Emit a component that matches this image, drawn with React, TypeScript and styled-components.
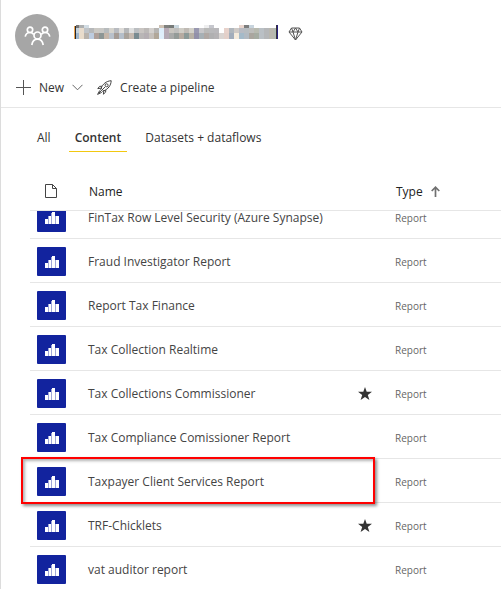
import React, { useLayoutEffect, useRef } from "react";
import styled, { createGlobalStyle } from "styled-components";

const GlobalStyle = createGlobalStyle`
  * { box-sizing: border-box; }
  body {
    margin: 0;
    background: #fff;
    color: #333;
    font-family: "Open Sans", "Noto Sans", sans-serif;
    font-size: 12px;
  }
  button { font: inherit; color: inherit; background: none; border: 0; padding: 0; cursor: pointer; }
`;

const Page = styled.main`
  display: flex;
  flex-direction: column;
  height: 100vh;
  border-left: 1px solid #dcdcdc;
`;

const Header = styled.header`
  display: flex;
  align-items: center;
  height: 70px;
  padding: 1px 14px 0;
`;

const Avatar = styled.div`
  display: flex;
  align-items: center;
  justify-content: center;
  width: 44px;
  height: 44px;
  border-radius: 50%;
  background: #a6a6a6;
`;

const Title = styled.h1`
  display: flex;
  align-items: center;
  gap: 9px;
  margin: 0 0 0 15px;
  padding-bottom: 4px;
`;

const Toolbar = styled.div`
  display: flex;
  align-items: center;
  gap: 14px;
  height: 38px;
  padding: 0 15px 2px;
  border-bottom: 1px solid #e6e6e6;
`;

const ToolButton = styled.button`
  display: flex;
  align-items: center;
  gap: 8px;
  line-height: 18px;
`;

const Tabs = styled.nav`
  display: flex;
  gap: 18px;
  height: 64px;
  padding: 18px 36px 0;
`;

const Tab = styled.button<{ $active?: boolean }>`
  height: 26px;
  padding: 0 ${(p) => (p.$active ? 6 : 0)}px 2px;
  line-height: 22px;
  font-weight: ${(p) => (p.$active ? 600 : 400)};
  border-bottom: 1px solid ${(p) => (p.$active ? "#f2c811" : "transparent")};
`;

const Scroller = styled.section`
  flex: 1;
  min-height: 0;
  padding-left: 29px;
  overflow-x: hidden;
  overflow-y: auto;
  scrollbar-width: none;
`;

const Table = styled.table`
  width: 100%;
  table-layout: fixed;
  border-collapse: separate;
  border-spacing: 0;
`;

const HeadCell = styled.th<{ $width?: number }>`
  position: sticky;
  top: 0;
  z-index: 2;
  width: ${(p) => (p.$width ? `${p.$width}px` : "auto")};
  height: 39px;
  padding: 0 0 0 1px;
  background: #fff;
  border-bottom: 1px solid #e6e6e6;
  color: #222;
  font-weight: 400;
  text-align: left;
  svg { display: block; }
`;

const FileHead = styled.span`
  display: block;
  padding-left: 14px;
`;

const SortButton = styled.button`
  display: flex;
  align-items: center;
  gap: 8px;
`;

const Row = styled.tr`
  position: relative;
`;

const Cell = styled.td<{ $small?: boolean }>`
  height: 44px;
  padding: 2px 0 0;
  border-bottom: 1px solid #e6e6e6;
  color: ${(p) => (p.$small ? "#666" : "#444")};
  font-size: ${(p) => (p.$small ? 10 : 12)}px;
  white-space: nowrap;
  svg { display: block; }
`;

const ReportTile = styled.span`
  display: flex;
  align-items: center;
  justify-content: center;
  width: 29px;
  height: 29px;
  margin-left: 7px;
  border-radius: 1px;
  background: #12239e;
`;

const Highlight = styled.span`
  position: absolute;
  inset: -2px 126px -1px -9px;
  border: 2px solid #f00;
  box-shadow: 2px 2px 3px rgba(0, 0, 0, 0.45), inset 2px 2px 3px rgba(0, 0, 0, 0.3);
  pointer-events: none;
`;

const UPPER = "c4d3df e8dccd bfc3c7 b6b8ba cbc9c4 c9c8c5 b7bbbd d5d3cd b8bbc0 dddbd8 b5b7b9 dedfdf bbbec1 c9c5c2 bcb9b7 d3d0cd b6b5b3 deeefa b7aab5 c8c5bf bfbebc cfcdc6 bfbab4 d2d0c9 9998b0 c7c6c9 b9b9b8 b9b9bb b9b8bb ffffff e7d2cb b0b7bd cfcac6 b8bbc3 b6bcc0 bdbdbb b8bab0".split(" ");
const LOWER = "9eb6cd e9dccb b9b3ac bdcce0 ad9f99 8d9695 c5b6a9 b9c1cb a59c96 b5bfca a9a39c c4b9b0 798b91 b9b6b6 b5afb3 c5c0bb b1a799 e0effb b4aab5 a9aaa9 949b98 b6aba1 8c9a98 b8b1a6 9290a9 a7b0b5 b0a8a4 b0b0b1 b5b3b5 dad5d2 e3d0c9 a2adbb f5ebdc a4bac9 b2bac2 aaa69f a6aca2".split(" ");
const PEAKS: [number, number, string][] = [
  [2, 3, "777777"], [5, 5, "aeb0b1"], [10, 5, "d3dde4"],
  [85, 5, "cfc2b4"], [90, 5, "7f817e"], [95, 5, "777b79"], [100, 5, "cbd8df"],
  [130, 5, "eeeeef"], [135, 5, "c6c7cd"],
  [165, 5, "e9d5cd"], [170, 5, "7c7e7e"], [175, 5, "c8d4dd"],
];

const MaskedName = () => (
  <svg width="205" height="18" viewBox="0 0 205 18" shapeRendering="crispEdges" role="img" aria-label="Workspace name hidden">
    {UPPER.map((c, i) => <rect key={i} x={i ? i * 5 : 2} y="3" width={i ? 5 : 3} height="5" fill={`#${c}`} />)}
    {LOWER.map((c, i) => <rect key={i} x={i ? i * 5 : 2} y="8" width={i ? 5 : 3} height="6" fill={`#${c}`} />)}
    {PEAKS.map(([x, w, c]) => <rect key={x} x={x} y="0" width={w} height="3" fill={`#${c}`} />)}
    <rect width="1" height="13" y="1" fill="#eca34c" />
    <rect x="1" width="1" height="13" y="1" fill="#25262d" />
    {[185, 190, 195, 200].map((x, i) => (
      <rect key={x} x={x} y="3" width={i === 3 ? 2 : 5} height="11" fill={["#bac0c5", "#b5b7b9", "#b9b7af", "#b2bbb0"][i]} />
    ))}
    <rect x="202" y="0" width="1" height="14" fill="#38343d" />
    <rect x="203" y="0" width="1" height="14" fill="#27207d" />
  </svg>
);

const PeopleIcon = () => (
  <svg width="28" height="22" viewBox="0 0 28 22" fill="none" stroke="#fff" strokeWidth="1.7">
    <circle cx="7" cy="4.8" r="2.7" />
    <circle cx="22" cy="4.8" r="2.7" />
    <circle cx="14.5" cy="10.5" r="3.5" />
    <path d="M2.2 11.6C2.8 8.9 4.7 7.5 7 7.5C8.8 7.5 9.8 8.2 10.8 9.4M18.2 9.4C19.2 8.2 20.2 7.5 22 7.5C24.3 7.5 26.2 8.9 26.8 11.6M8.8 20C9.5 16.2 11.6 14.2 14.5 14.2S19.5 16.2 20.2 20" />
  </svg>
);

const DiamondIcon = () => (
  <svg width="15" height="14" viewBox="0 0 15 14" fill="none" stroke="#555" strokeWidth="1" strokeLinejoin="round">
    <path d="M3.5 1H11.5L14 5L7.5 13L1 5ZM1 5H14M3.5 1L5 5L7.5 13L10 5L11.5 1M5 5L7.5 1L10 5" />
  </svg>
);

const PlusIcon = () => (
  <svg width="15" height="15" viewBox="0 0 15 15" stroke="#555"><path d="M7.5 0V15M0 7.5H15" /></svg>
);

const ChevronIcon = () => (
  <svg width="11" height="7" viewBox="0 0 11 7" fill="none" stroke="#666"><path d="M.5 .8L5.5 5.8L10.5 .8" /></svg>
);

const RocketIcon = () => (
  <svg width="15" height="15" viewBox="0 0 15 15" fill="none" stroke="#444" strokeWidth="1" strokeLinejoin="round">
    <path d="M4.2 8.2C5.6 4.2 9.2 1 14.2 .7C14 5.5 11 9.2 6.8 10.8ZM5 6.2L2.5 6.4L.8 8.6L4.2 8.2M8.8 9.8L8.6 12.2L6.4 14.2L6.8 10.8M3.4 9.2L5.8 11.7M2.8 10.4L.6 14.4L4.8 12.3M1.8 13.2L4 10.9M5.8 9.2L8 7" />
    <circle cx="9.6" cy="5.3" r="1.5" />
  </svg>
);

const FileIcon = () => (
  <svg width="12" height="14" viewBox="0 0 12 14" fill="none" stroke="#444"><path d="M.5 .5H7.5L11.5 4.5V13.5H.5ZM7.5 .5V4.5H11.5" /></svg>
);

const SortIcon = () => (
  <svg width="9" height="11" viewBox="0 0 9 11" fill="none" stroke="#707070" strokeWidth="1.7"><path d="M4.5 11V1.2M.7 5L4.5 1.2L8.3 5" /></svg>
);

const ReportIcon = () => (
  <svg width="14" height="12" viewBox="0 0 14 12" shapeRendering="crispEdges">
    <path d="M0 7H3V12H0ZM4 4H6V12H4ZM7 0H10V12H7ZM11 4H14V12H11Z" fill="#fff" />
    <path d="M3 4H4V12H3ZM6 1H7V12H6ZM10 4H11V12H10Z" fill="#a0a7d8" />
  </svg>
);

const StarIcon = () => (
  <svg width="14" height="13" viewBox="0 0 14 13" role="img" aria-label="Favorite">
    <path d="M7 0L8.7 4.8H14L9.8 7.9L11.4 13L7 9.9L2.6 13L4.2 7.9L0 4.8H5.3Z" fill="#333" />
  </svg>
);

type Report = { name: string; starred?: boolean; highlighted?: boolean };

const reports: Report[] = [
  { name: "FinTax Row Level Security (Azure Synapse)" },
  { name: "Fraud Investigator Report" },
  { name: "Report Tax Finance" },
  { name: "Tax Collection Realtime" },
  { name: "Tax Collections Commissioner", starred: true },
  { name: "Tax Compliance Comissioner Report" },
  { name: "Taxpayer Client Services Report", highlighted: true },
  { name: "TRF-Chicklets", starred: true },
  { name: "vat auditor report" },
];

const INITIAL_SCROLL = 16;

export default function App() {
  const scroller = useRef<HTMLElement>(null);

  useLayoutEffect(() => {
    if (scroller.current) scroller.current.scrollTop = INITIAL_SCROLL;
  }, []);

  return (
    <>
      <GlobalStyle />
      <Page>
        <Header>
          <Avatar><PeopleIcon /></Avatar>
          <Title><MaskedName /><DiamondIcon /></Title>
        </Header>
        <Toolbar>
          <ToolButton><PlusIcon />New<ChevronIcon /></ToolButton>
          <ToolButton><RocketIcon />Create a pipeline</ToolButton>
        </Toolbar>
        <Tabs>
          <Tab>All</Tab>
          <Tab $active aria-current="page">Content</Tab>
          <Tab>Datasets + dataflows</Tab>
        </Tabs>
        <Scroller ref={scroller}>
          <Table>
            <thead>
              <tr>
                <HeadCell $width={58} aria-label="Kind"><FileHead><FileIcon /></FileHead></HeadCell>
                <HeadCell>Name</HeadCell>
                <HeadCell $width={37} aria-label="Favorite" />
                <HeadCell $width={106} aria-sort="ascending"><SortButton>Type<SortIcon /></SortButton></HeadCell>
              </tr>
            </thead>
            <tbody>
              {reports.map((r) => (
                <Row key={r.name}>
                  <Cell>
                    <ReportTile><ReportIcon /></ReportTile>
                    {r.highlighted && <Highlight />}
                  </Cell>
                  <Cell>{r.name}</Cell>
                  <Cell>{r.starred && <StarIcon />}</Cell>
                  <Cell $small>Report</Cell>
                </Row>
              ))}
            </tbody>
          </Table>
        </Scroller>
      </Page>
    </>
  );
}
